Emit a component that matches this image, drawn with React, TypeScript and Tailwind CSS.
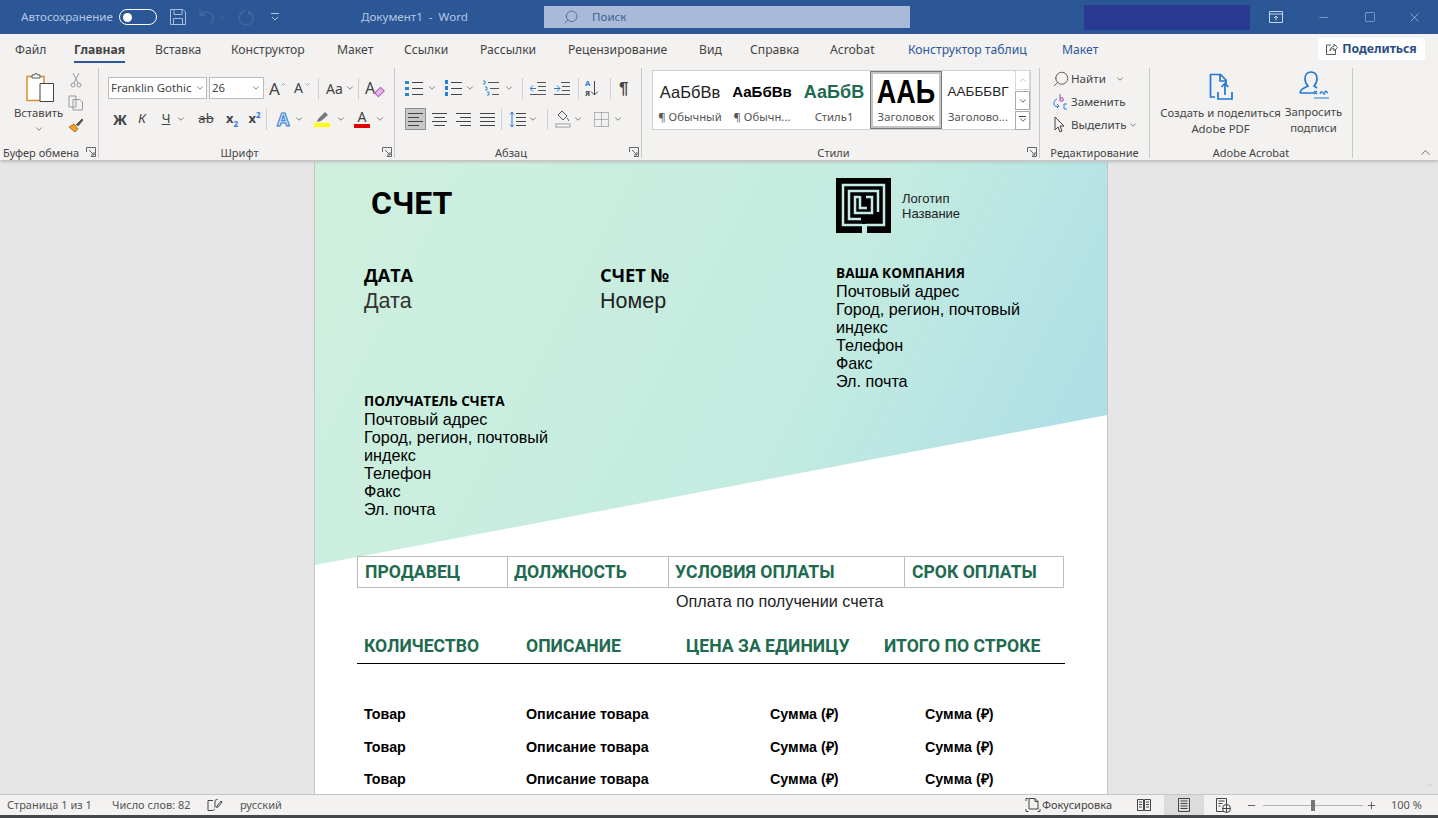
import type { ReactNode } from "react";
import { ChevronDown, ChevronUp, Minus, Plus, Search, Square, X } from "lucide-react";

const chevron = <ChevronDown size={10} strokeWidth={1.6} className="text-[#444] shrink-0" />;

function Ico({ w = 20, h = 20, children }: { w?: number; h?: number; children: ReactNode }) {
  return (
    <svg width={w} height={h} viewBox={`0 0 ${w} ${h}`} fill="none" stroke="#444" strokeWidth="1" className="shrink-0">
      {children}
    </svg>
  );
}

function Launcher() {
  return (
    <svg width="10" height="10" viewBox="0 0 10 10" fill="none" stroke="#666" strokeWidth="1">
      <path d="M.5 5V.5H9.5V9.5H5M3 3l5 5M8 5v3H5" />
    </svg>
  );
}

function Sep() {
  return <div className="w-px h-[21px] bg-[#cfcfcf] shrink-0" />;
}

function Lines({ kind }: { kind: "left" | "center" | "right" | "full" }) {
  const rows = {
    left: "M1 3.5h15M1 7.5h11M1 11.5h15M1 15.5h11",
    center: "M1 3.5h15M3 7.5h11M1 11.5h15M3 15.5h11",
    right: "M1 3.5h15M5 7.5h11M1 11.5h15M5 15.5h11",
    full: "M1 3.5h15M1 7.5h15M1 11.5h15M1 15.5h15",
  }[kind];
  return (
    <Ico w={17} h={19}>
      <path d={rows} />
    </Ico>
  );
}

const tabs = [
  { label: "Файл", cls: "w-[59px] text-[#444]" },
  { label: "Главная", cls: "w-[81px] font-bold text-[#444]" },
  { label: "Вставка", cls: "w-[76px] text-[#444]" },
  { label: "Конструктор", cls: "w-[106px] text-[#444]" },
  { label: "Макет", cls: "w-[67px] text-[#444]" },
  { label: "Ссылки", cls: "w-[76px] text-[#444]" },
  { label: "Рассылки", cls: "w-[88px] text-[#444]" },
  { label: "Рецензирование", cls: "w-[131px] text-[#444]" },
  { label: "Вид", cls: "w-[51px] text-[#444]" },
  { label: "Справка", cls: "w-[80px] text-[#444]" },
  { label: "Acrobat", cls: "w-[78px] text-[#444]" },
  { label: "Конструктор таблиц", cls: "w-[154px] text-[#2b579a]" },
  { label: "Макет", cls: "w-[260px] text-[#2b579a]" },
];

function TitleBar() {
  return (
    <div className="h-[34px] bg-[#2b5797] flex items-center text-[11.6px] text-[#b4c6e0] shrink-0">
      <span className="ml-[21px] w-[98px]">Автосохранение</span>
      <div className="w-[38px] h-[16px] rounded-full border border-white flex items-center pl-[3px]">
        <div className="w-[9px] h-[9px] rounded-full bg-white" />
      </div>
      <svg width="18" height="18" viewBox="0 0 18 18" fill="none" stroke="#a9bcd9" className="ml-[12px]">
        <path d="M1.5 1.5H14l2.5 2.5v12.5H1.5zM5 1.5v5h8v-5M4.5 16.5v-6h9v6" />
      </svg>
      <svg width="18" height="18" viewBox="0 0 18 18" fill="none" stroke="#46699f" strokeWidth="1.3" className="ml-[11px]">
        <path d="M2 2v5h5M2.5 7C5 3.5 10 3 13 5.5s3 6.5 0 10" />
      </svg>
      <ChevronDown size={9} className="text-[#46699f] ml-[2px]" />
      <svg width="18" height="18" viewBox="0 0 18 18" fill="none" stroke="#46699f" strokeWidth="1.3" className="ml-[9px]">
        <path d="M13 2v4h3M14 4a7 7 0 1 1-5-1" />
      </svg>
      <svg width="10" height="10" viewBox="0 0 10 10" fill="none" stroke="#b4c6e0" className="ml-[16px]">
        <path d="M1 1.5h8M2 5l3 3 3-3" />
      </svg>
      <span className="ml-[81px] w-[183px]">Документ1 &nbsp;-&nbsp; Word</span>
      <div className="w-[366px] h-[22px] bg-[#a8bad7] flex items-center text-[#3f5f95]">
        <Search size={16} strokeWidth={1.2} className="ml-[19px] -scale-x-100" />
        <span className="ml-[13px]">Поиск</span>
      </div>
      <div className="ml-[174px] w-[166px] h-[25px] bg-[#2a3a92]" />
      <svg width="14" height="12" viewBox="0 0 14 12" fill="none" stroke="#c6d3e8" className="ml-[19px]">
        <path d="M.5.5h13v11H.5zM.5 3h13M7 9.5V5M5 7l2-2 2 2" />
      </svg>
      <Minus size={13} strokeWidth={1} className="ml-[34px] text-[#c6d3e8]" />
      <Square size={12} strokeWidth={1} className="ml-[34px] text-[#c6d3e8]" />
      <X size={15} strokeWidth={1} className="ml-[31px] text-[#c6d3e8]" />
    </div>
  );
}

function TabRow() {
  return (
    <div className="h-[30px] bg-[#f3f2f1] flex items-center pl-[15px] text-[12.2px] shrink-0 relative">
      {tabs.map((t, i) => (
        <span key={i} className={`${t.cls} h-[30px] pt-[2px] shrink-0 flex items-center`}>
          <span className="relative">
            {t.label}
            {t.label === "Главная" && <span className="absolute left-0 right-0 -bottom-[4px] h-[2px] bg-[#2b579a]" />}
          </span>
        </span>
      ))}
      <div className="absolute right-[13px] top-[4px] w-[107px] h-[22px] bg-white rounded-[2px] flex items-center justify-center gap-[4px] text-[#2b4d80] font-bold">
        <svg width="12" height="12" viewBox="0 0 12 12" fill="none" stroke="#555">
          <path d="M5 2H.5v9.5h9V7M4 8c0-3 2-4.5 4-4.5V1l3.5 3.5L8 8V5.5C6 5.5 4.5 6.5 4 8z" />
        </svg>
        Поделиться
      </div>
    </div>
  );
}

function Group({ w, label, launcher, labelCls = "justify-center", children }: { w: string; label: string; launcher?: boolean; labelCls?: string; children: ReactNode }) {
  return (
    <div className={`${w} h-full border-r border-[#c8c8c8] flex flex-col shrink-0`}>
      <div className="flex-1 min-h-0">{children}</div>
      <div className={`h-[16px] shrink-0 relative flex items-end text-[11px] text-[#444] leading-[11px] ${labelCls}`}>
        {label}
        {launcher && (
          <span className="absolute right-[2px] top-[5px] flex">
            <Launcher />
          </span>
        )}
      </div>
    </div>
  );
}

function Clipboard() {
  return (
    <Group w="w-[99px]" label="Буфер обмена" launcher labelCls="justify-start pl-[3px]">
      <div className="flex h-full">
        <div className="w-[66px] flex flex-col items-center pt-[4px] pl-[11px]">
          <svg width="29" height="31" viewBox="0 0 29 31" fill="none" className="shrink-0 ml-[4px]">
            <path d="M1 4.5h17v24H1z" fill="#fff" stroke="#d98e2b" strokeWidth="1.5" />
            <path d="M6 6V3h2.5a1.5 1.5 0 0 1 3 0H14v3z" fill="#fff" stroke="#555" />
            <path d="M14 11.5h13.5v18H14z" fill="#fff" stroke="#444" />
          </svg>
          <span className="text-[11.3px] leading-[16px] text-[#444] mt-[2px]">Вставить</span>
          <ChevronDown size={10} strokeWidth={1.6} className="text-[#444] mt-[3px]" />
        </div>
        <div className="flex flex-col items-center pt-[4px] gap-[7px] w-[19px]">
          <Ico w={14} h={16}>
            <path d="M4 1l5 10M10 1L5 11" stroke="#999" />
            <circle cx="4" cy="13" r="2" stroke="#999" />
            <circle cx="10" cy="13" r="2" stroke="#999" />
          </Ico>
          <Ico w={16} h={16}>
            <path d="M1 1h7v11H1zM5 4.5h7l2.5 2.5v8H5z" stroke="#999" fill="#f3f2f1" />
          </Ico>
          <svg width="16" height="15" viewBox="0 0 16 15" fill="none">
            <path d="M1 9l5-3 4 5-3 3z" fill="#f0a030" stroke="#b87518" />
            <path d="M8 7l6-6 1 1-5 6" fill="#555" stroke="#555" />
          </svg>
        </div>
      </div>
    </Group>
  );
}

function FontGroup() {
  return (
    <Group w="w-[296px]" label="Шрифт" launcher labelCls="justify-center pr-[14px]">
      <div className="pl-[9px] pt-[8px] text-[#444]">
        <div className="flex items-center h-[24px]">
          <div className="w-[99px] h-[22px] bg-white border border-[#bbb] flex items-center justify-between pl-[2px] pr-[1px] text-[11.4px] whitespace-nowrap">
            Franklin Gothic {chevron}
          </div>
          <div className="ml-[2px] w-[55px] h-[22px] bg-white border border-[#bbb] flex items-center justify-between pl-[2px] pr-[2px] text-[11.4px]">
            26 {chevron}
          </div>
          <span className="ml-[5px] w-[22px] text-[17px] leading-none relative">
            A<ChevronUp size={7} strokeWidth={2} className="absolute left-[11px] top-[1px] text-[#2b7cd3]" />
          </span>
          <span className="ml-[3px] w-[21px] text-[14px] leading-none relative">
            A<ChevronDown size={7} strokeWidth={2} className="absolute left-[10px] top-[0px] text-[#2b7cd3]" />
          </span>
          <span className="ml-[3px] mr-[3px]"><Sep /></span>
          <span className="text-[14px] ml-[4px] w-[19px] whitespace-nowrap">Aa</span>
          {chevron}
          <span className="ml-[3px] mr-[6px]"><Sep /></span>
          <span className="text-[16px] relative leading-none w-[20px]">
            A
            <span className="absolute left-[10px] top-[9px] w-[9px] h-[6px] bg-[#e4b9e8] border border-[#b157b8] -rotate-45" />
          </span>
        </div>
        <div className="flex items-center h-[24px] mt-[7px]">
          <span className="w-[24px] text-[14px] font-bold text-center">Ж</span>
          <span className="w-[20px] text-[13px] italic text-center [font-family:'Liberation_Sans',sans-serif]">К</span>
          <span className="ml-[4px] w-[20px] text-[13px] underline text-center">Ч</span>
          <span className="w-[14px] flex">{chevron}</span>
          <span className="ml-[4px] w-[24px] text-[13px] line-through text-center">ab</span>
          <span className="ml-[3px] w-[22px] text-[13px] font-bold text-center">
            x<span className="text-[8px] align-sub text-[#2b7cd3]">2</span>
          </span>
          <span className="w-[23px] text-[13px] font-bold text-center">
            x<span className="text-[8px] align-super text-[#2b7cd3]">2</span>
          </span>
          <span className="mr-[10px]"><Sep /></span>
          <span className="w-[16px] text-[18px] font-bold leading-none text-[#cfe5fa] [-webkit-text-stroke:1px_#2b7cd3]">A</span>
          <span className="w-[14px] ml-[1px] flex">{chevron}</span>
          <span className="w-[22px] ml-[3px] flex flex-col items-center">
            <svg width="16" height="10" viewBox="0 0 16 10" fill="#777">
              <path d="M3 10l1-3 7-7 3 3-7 6z" />
            </svg>
            <span className="w-[16px] h-[4px] bg-[#ffff00] mt-[1px]" />
          </span>
          <span className="w-[14px] ml-[3px] flex">{chevron}</span>
          <span className="w-[18px] ml-[3px] flex flex-col items-center text-[14px] leading-[14px]">
            A
            <span className="w-[16px] h-[4px] bg-[#e00000]" />
          </span>
          <span className="ml-[4px] flex">{chevron}</span>
        </div>
      </div>
    </Group>
  );
}

function ListIcon({ numbers }: { numbers?: boolean }) {
  return (
    <svg width="18" height="17" viewBox="0 0 18 17" fill="none" stroke="#444">
      <path d="M7 2.5h11M7 8.5h11M7 14.5h11" />
      {numbers ? (
        <g fill="#2b7cd3" stroke="none">
          <rect x="1" y="0" width="3" height="4" />
          <rect x="1" y="6" width="3" height="4" />
          <rect x="1" y="12" width="3" height="4" />
        </g>
      ) : (
        <g fill="#2b88c8" stroke="none">
          <rect x="0" y="1" width="4" height="3" />
          <rect x="0" y="7" width="4" height="3" />
          <rect x="0" y="13" width="4" height="3" />
        </g>
      )}
    </svg>
  );
}

function Paragraph() {
  return (
    <Group w="w-[247px]" label="Абзац" launcher labelCls="justify-center pr-[14px]">
      <div className="pl-[10px] pt-[8px] text-[#444]">
        <div className="flex items-center h-[24px]">
          <span className="w-[18px] flex"><ListIcon /></span>
          <span className="ml-[4px] w-[16px] flex">{chevron}</span>
          <span className="ml-[1px] w-[20px] flex"><ListIcon numbers /></span>
          <span className="ml-[1px] w-[14px] flex">{chevron}</span>
          <span className="ml-[3px] w-[22px] flex">
            <svg width="18" height="17" viewBox="0 0 18 17" fill="none" stroke="#555">
              <path d="M6 2.5h11M8 8.5h9M10 14.5h7" />
              <path d="M1 1h2v3H1M3 7h2v3H3M5 12h2v3H5" stroke="#2b88c8" />
            </svg>
          </span>
          <span className="w-[14px] flex">{chevron}</span>
          <span className="ml-[4px]"><Sep /></span>
          <span className="ml-[7px] flex">
            <svg width="16" height="13" viewBox="0 0 16 13" fill="none" stroke="#555">
              <path d="M7 .5h9M8 4.5h8M8 8.5h8M0 12.5h16" />
              <path d="M6 6.5H0M3 3.5l-3 3 3 3" stroke="#2b7cd3" />
            </svg>
          </span>
          <span className="ml-[8px] flex">
            <svg width="16" height="13" viewBox="0 0 16 13" fill="none" stroke="#555">
              <path d="M7 .5h9M8 4.5h8M8 8.5h8M0 12.5h16" />
              <path d="M0 6.5h6M3 3.5l3 3-3 3" stroke="#2b7cd3" />
            </svg>
          </span>
          <span className="ml-[8px]"><Sep /></span>
          <span className="ml-[6px] w-[19px] flex items-center">
            <span className="flex flex-col text-[7.5px] leading-[10px] font-bold">
              <span className="text-[#2b7cd3]">А</span>
              <span>Я</span>
            </span>
            <svg width="9" height="16" viewBox="0 0 9 16" fill="none" stroke="#444">
              <path d="M4.5 1v14M1 11.5l3.5 3.5L8 11.5" />
            </svg>
          </span>
          <span className="ml-[6px]"><Sep /></span>
          <span className="ml-[8px] text-[17px] font-bold leading-none [font-family:'Liberation_Sans',sans-serif]">¶</span>
        </div>
        <div className="flex items-center h-[24px] mt-[7px]">
          <span className="w-[21px] h-[22px] bg-[#c8c8c8] border border-[#909090] flex items-center justify-center"><Lines kind="left" /></span>
          <span className="ml-[5px] flex"><Lines kind="center" /></span>
          <span className="ml-[7px] flex"><Lines kind="right" /></span>
          <span className="ml-[7px] flex"><Lines kind="full" /></span>
          <span className="ml-[5px]"><Sep /></span>
          <span className="ml-[7px] flex">
            <svg width="17" height="17" viewBox="0 0 17 17" fill="none" stroke="#444">
              <path d="M7 2.5h10M7 6.5h10M7 10.5h10M7 14.5h10" />
              <path d="M3 1v15M1 3.5L3 1l2 2.5M1 13.5L3 16l2-2.5" stroke="#2b7cd3" />
            </svg>
          </span>
          <span className="ml-[2px] w-[19px] flex">{chevron}</span>
          <Sep />
          <span className="ml-[7px] flex">
            <svg width="16" height="18" viewBox="0 0 16 18" fill="none" stroke="#555">
              <path d="M7 1l5 5-4 4-5-5zM12 8c1 1.5 2 2 1.5 3" />
              <rect x="1" y="14" width="14" height="3" stroke="#999" fill="#fff" />
            </svg>
          </span>
          <span className="ml-[2px] w-[16px] flex">{chevron}</span>
          <span className="ml-[5px] flex">
            <svg width="15" height="15" viewBox="0 0 15 15" fill="none" stroke="#777" strokeDasharray="1 1">
              <path d="M.5.5h14v14H.5zM7.5.5v14M.5 7.5h14" />
            </svg>
          </span>
          <span className="ml-[4px] flex">{chevron}</span>
        </div>
      </div>
    </Group>
  );
}

function StyleItem({ sample, label, sel }: { sample: ReactNode; label: string; sel?: boolean }) {
  return (
    <div className={`w-[72px] h-[58px] shrink-0 flex flex-col items-center overflow-hidden ${sel ? "shadow-[inset_0_0_0_1px_#777,inset_0_0_0_3px_#c4c4c4]" : ""}`}>
      <div className="h-[42px] w-[66px] flex items-center justify-center overflow-hidden whitespace-nowrap">{sample}</div>
      <div className="-mt-[3px] text-[11.3px] leading-[13px] text-[#555] whitespace-nowrap">{label}</div>
    </div>
  );
}

function Styles() {
  const arial = "[font-family:'Liberation_Sans',sans-serif]";
  return (
    <Group w="w-[398px]" label="Стили" launcher labelCls="justify-center pr-[14px]">
      <div className="pl-[10px] pt-[2px]">
        <div className="w-[379px] h-[60px] bg-white border border-[#cfcfcf] flex items-center pl-[1px]">
          <StyleItem label="¶ Обычный" sample={<span className={`${arial} text-[16.5px] text-[#222]`}>АаБбВв</span>} />
          <StyleItem label="¶ Обычн..." sample={<span className={`${arial} text-[15px] font-bold text-black`}>АаБбВв</span>} />
          <StyleItem label="Стиль1" sample={<span className={`${arial} text-[18px] font-bold text-[#1f6b50]`}>АаБбВ</span>} />
          <StyleItem label="Заголовок" sel sample={<span className={`${arial} inline-block scale-y-125 text-[27px] font-bold text-black`}>ААЬ</span>} />
          <StyleItem label="Заголово..." sample={<span className={`${arial} text-[13.5px] text-[#222]`}>ААБББВГ</span>} />
          <div className="ml-[1px] w-[15px] flex flex-col gap-[1px]">
            <div className="h-[20px] border border-[#d8d8d8] flex items-center justify-center"><ChevronUp size={10} className="text-[#bbb]" /></div>
            <div className="h-[19px] border border-[#aaa] flex items-center justify-center"><ChevronDown size={10} strokeWidth={2} className="text-[#444]" /></div>
            <div className="h-[19px] border border-[#aaa] flex flex-col items-center justify-center text-[#444]">
              <span className="w-[7px] h-px bg-[#444]" />
              <ChevronDown size={10} strokeWidth={2} className="-mt-[2px]" />
            </div>
          </div>
        </div>
      </div>
    </Group>
  );
}

function Editing() {
  return (
    <Group w="w-[110px]" label="Редактирование">
      <div className="pl-[12px] pt-[1px] text-[11.6px] leading-[20px] text-[#444] flex flex-col gap-[3px]">
        <div className="flex items-center gap-[1px]">
          <Search size={18} strokeWidth={1.1} className="-scale-x-100" />
          <span>Найти</span>
          <span className="ml-[8px] flex">{chevron}</span>
        </div>
        <div className="flex items-center gap-[2px]">
          <svg width="17" height="18" viewBox="0 0 17 18" fill="none">
            <path d="M5 6C2 7 1 11 3 13c1 1 3 1 4 0M5 11l2 2-2 2" stroke="#2b7cd3" />
            <path d="M8 1v7M8 5h3v3H8" stroke="#a33fb0" />
            <path d="M15 11h-3v5h3" stroke="#2b7cd3" />
          </svg>
          <span>Заменить</span>
        </div>
        <div className="flex items-center gap-[2px]">
          <svg width="17" height="18" viewBox="0 0 17 18" fill="none" stroke="#444">
            <path d="M3 1v13l3-3 2 5 2-1-2-5h4z" />
          </svg>
          <span>Выделить</span>
          {chevron}
        </div>
      </div>
    </Group>
  );
}

function Acrobat() {
  return (
    <Group w="w-[203px]" label="Adobe Acrobat">
      <div className="flex h-full text-[11.3px] leading-[16px] text-[#444] text-center">
        <div className="w-[141px] shrink-0 flex flex-col items-center pt-[5px] whitespace-nowrap">
          <svg width="24" height="28" viewBox="0 0 24 28" fill="none" stroke="#1f78d1" strokeWidth="1.7">
            <path d="M6 24H1.5V1.5h10L17 7v4M11 1.5V8h6" />
            <path d="M9 19v7h14v-7M16 22v-11M12.5 14l3.5-3.5 3.5 3.5" />
          </svg>
          <span className="mt-[4px]">Создать и поделиться</span>
          <span>Adobe PDF</span>
        </div>
        <div className="flex-1 -ml-[8px] pr-[8px] flex flex-col items-center pt-[3px]">
          <svg width="32" height="30" viewBox="0 0 32 30" fill="none" stroke="#1f78d1" strokeWidth="1.6">
            <path d="M2 22c0-4 4-5 8-7-2-2-3-4-3-7 0-4 2-7 6-7s6 3 6 7c0 3-1 5-3 7l3 2M2 22h14" />
            <path d="M16 20l3 3m0-3l-3 3M22 23c1-3 2-3 3-1s2 1 2-1 2 0 3 1M16 27h15" strokeWidth="1.2" />
          </svg>
          <span className="mt-[3px]">Запросить</span>
          <span>подписи</span>
        </div>
      </div>
    </Group>
  );
}

function Ribbon() {
  return (
    <div className="h-[96px] bg-[#f3f2f1] flex shrink-0 pt-[4px] pb-[2px] relative shadow-[0_2px_3px_rgba(0,0,0,0.18)] z-10">
      <Clipboard />
      <FontGroup />
      <Paragraph />
      <Styles />
      <Editing />
      <Acrobat />
      <ChevronUp size={15} strokeWidth={1.2} className="absolute right-[5px] bottom-[0px] text-[#444]" />
    </div>
  );
}

function Maze() {
  return (
    <svg width="55" height="55" viewBox="0 0 55 55" className="shrink-0">
      <rect width="55" height="55" fill="#000" />
      <g fill="none" stroke="#c4ebe4" strokeWidth="2.5">
        <path d="M26 47H7V7h41v40H30" />
        <path d="M25 41H13V13h29v21" />
        <path d="M24 19h-5v16h17V19h-6" />
        <path d="M24 18v12h7" />
      </g>
      <rect x="26" y="46" width="5" height="9" fill="#c4ebe4" />
    </svg>
  );
}

function Address({ title }: { title: string }) {
  return (
    <div className="text-[16.2px] leading-[18px] text-black">
      <div className="[font-family:'Open_Sans',sans-serif] font-bold text-[13.6px] leading-[18px]">{title}</div>
      <div>Почтовый адрес</div>
      <div className="w-[190px]">Город, регион, почтовый индекс</div>
      <div>Телефон</div>
      <div>Факс</div>
      <div>Эл. почта</div>
    </div>
  );
}

const rows = [0, 1, 2];
const green = "text-[#1f6b50] [font-family:'Roboto',sans-serif] font-bold text-[17.6px] whitespace-nowrap";

function Page() {
  return (
    <div className="w-[794px] h-[640px] shrink-0 bg-white border-x border-[#c6c6c6] relative overflow-hidden mt-[2px] [font-family:'Liberation_Sans',sans-serif]">
      <svg className="absolute left-0 top-0" width="792" height="404" viewBox="0 0 792 404">
        <defs>
          <linearGradient id="bg" x1="0" y1="0" x2="792" y2="404" gradientUnits="userSpaceOnUse">
            <stop offset="0" stopColor="#d0f0de" />
            <stop offset="0.6" stopColor="#c3ebe0" />
            <stop offset="1" stopColor="#a8dce8" />
          </linearGradient>
        </defs>
        <polygon points="0,0 792,0 792,253 0,403" fill="url(#bg)" />
      </svg>
      <div className="relative">
        <div className="grid grid-cols-[236px_236px_1fr] pl-[49px] pt-[16px] h-[102px]">
          <div className="pl-[7px] pt-[8px] col-span-2 text-[32px] leading-[34px] font-bold text-black [font-family:'Roboto',sans-serif]">СЧЕТ</div>
          <div className="flex items-start">
            <Maze />
            <div className="ml-[11px] mt-[13px] text-[13px] leading-[15px] text-[#222]">
              Логотип<br />Название
            </div>
          </div>
        </div>
        <div className="grid grid-cols-[236px_236px_1fr] pl-[49px] h-[128px]">
          <div>
            <div className="[font-family:'Open_Sans',sans-serif] font-bold text-[18px] leading-[22px]">ДАТА</div>
            <div className="text-[21.5px] leading-[30px] text-[#333]">Дата</div>
          </div>
          <div>
            <div className="[font-family:'Open_Sans',sans-serif] font-bold text-[18.3px] leading-[22px]">СЧЕТ №</div>
            <div className="text-[21.5px] leading-[30px] text-[#222]">Номер</div>
          </div>
          <Address title="ВАША КОМПАНИЯ" />
        </div>
        <div className="pl-[49px]">
          <Address title="ПОЛУЧАТЕЛЬ СЧЕТА" />
        </div>
        <div className="ml-[42px] mt-[38px] w-[707px] h-[32px] border border-[#bdbdbd] grid grid-cols-[150px_161px_236px_1fr] items-center">
          <div className={`${green} pl-[7px] h-full flex items-center border-r border-[#bdbdbd]`}>ПРОДАВЕЦ</div>
          <div className={`${green} pl-[6px] h-full flex items-center border-r border-[#bdbdbd]`}>ДОЛЖНОСТЬ</div>
          <div className={`${green} pl-[6px] h-full flex items-center border-r border-[#bdbdbd]`}>УСЛОВИЯ ОПЛАТЫ</div>
          <div className={`${green} pl-[7px] h-full flex items-center`}>СРОК ОПЛАТЫ</div>
        </div>
        <div className="mt-[4px] pl-[361px] text-[16.2px] leading-[18px] text-[#222]">Оплата по получении счета</div>
        <div className="mt-[19px] ml-[42px] w-[708px] h-[35px] border-b border-black flex pl-[7px] pt-[5px] leading-[24px]">
          <div className={`${green} w-[162px]`}>КОЛИЧЕСТВО</div>
          <div className={`${green} w-[160px]`}>ОПИСАНИЕ</div>
          <div className={`${green} w-[198px]`}>ЦЕНА ЗА ЕДИНИЦУ</div>
          <div className={green}>ИТОГО ПО СТРОКЕ</div>
        </div>
        <div className="mt-[42px] pl-[49px] flex flex-col gap-[15.5px]">
          {rows.map(r => (
            <div key={r} className="flex text-[14.3px] leading-[17px] font-bold text-black">
              <div className="w-[162px]">Товар</div>
              <div className="w-[244px]">Описание товара</div>
              <div className="w-[155px]">Сумма (₽)</div>
              <div>Сумма (₽)</div>
            </div>
          ))}
        </div>
      </div>
    </div>
  );
}

function StatusBar() {
  return (
    <div className="h-[21px] bg-[#f3f2f1] border-t border-[#c6c6c6] flex items-center text-[11px] text-[#555] shrink-0 z-10 relative">
      <span className="ml-[7px] w-[105px]">Страница 1 из 1</span>
      <span className="w-[95px]">Число слов: 82</span>
      <svg width="16" height="14" viewBox="0 0 16 14" fill="none" stroke="#444">
        <path d="M6 2.5H1v10h5c.5-1 1.5-1 2-1M8 2.5v7M8 2.5c1-1 2-1 3-1M10 8l4-5 1 1-4 5-1.5.5z" />
      </svg>
      <span className="ml-[17px] w-[785px]">русский</span>
      <svg width="16" height="16" viewBox="0 0 16 16" fill="none" stroke="#444">
        <path d="M1 4V1.5h2.5M1 12v2.5h2.5M15 12v2.5h-2.5M4 1.5h6l3 3V12H4zM10 1.5v3h3" />
      </svg>
      <span className="ml-[1px] w-[95px] text-[#444]">Фокусировка</span>
      <svg width="14" height="13" viewBox="0 0 14 13" fill="none" stroke="#444">
        <path d="M.5.5h6v11h-6zM7.5.5h6v11h-6zM2 3h3M2 5.5h3M2 8h3M9 3h3M9 5.5h3M9 8h3" />
      </svg>
      <div className="ml-[13px] w-[40px] h-[20px] bg-[#dcdcdc] flex items-center justify-center">
        <svg width="12" height="14" viewBox="0 0 12 14" fill="none" stroke="#444">
          <path d="M.5.5h11v13H.5zM2.5 3h7M2.5 5.5h7M2.5 8h7M2.5 10.5h7" />
        </svg>
      </div>
      <svg width="15" height="15" viewBox="0 0 15 15" fill="none" stroke="#444" className="ml-[12px]">
        <path d="M.5.5h10v13h-10zM2.5 3h6M2.5 5.5h4M2.5 8h2" />
        <circle cx="10.5" cy="10.5" r="4" fill="#f3f2f1" />
        <path d="M6.5 10.5h8M10.5 6.5v8" />
      </svg>
      <Minus size={11} className="ml-[15px] text-[#555]" />
      <div className="ml-[6px] w-[100px] h-px bg-[#b5b5b5] relative">
        <div className="absolute left-[48px] -top-[5px] w-[4px] h-[11px] bg-[#777]" />
      </div>
      <Plus size={11} className="ml-[3px] text-[#555]" />
      <span className="ml-[14px]">100 %</span>
    </div>
  );
}

export default function App() {
  return (
    <div className="w-[1438px] h-[818px] overflow-hidden flex flex-col bg-[#e6e6e6] [font-family:'Noto_Sans',sans-serif]">
      <TitleBar />
      <TabRow />
      <Ribbon />
      <div className="flex-1 min-h-0 flex overflow-hidden">
        <div className="flex-1 flex justify-center overflow-hidden">
          <Page />
        </div>
        <div className="w-[16px] flex flex-col justify-end items-center pb-[4px]">
          <ChevronDown size={10} className="text-[#c4c4c4]" />
        </div>
      </div>
      <StatusBar />
      <div className="h-[3px] bg-[#45474b] shrink-0" />
    </div>
  );
}
